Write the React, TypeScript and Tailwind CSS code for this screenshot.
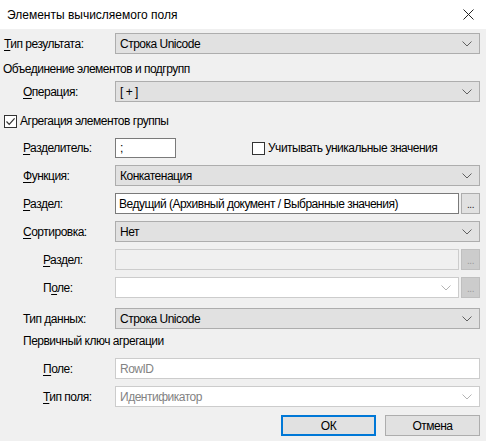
import React from 'react'

// ── Small pieces ──

function Chevron({ light = false }: { light?: boolean }) {
  return (
    <svg width="10" height="6" viewBox="0 0 10 6" className="shrink-0">
      <path
        d="M0.5 0.5 L5 5 L9.5 0.5"
        fill="none"
        stroke={light ? '#b4b4b4' : '#606060'}
        strokeWidth="1"
      />
    </svg>
  )
}

function Label({ text, u, indent }: { text: string; u: number; indent: 0 | 1 | 2 }) {
  const pad = indent === 0 ? 'pl-[4px]' : indent === 1 ? 'pl-[23px]' : 'pl-[43px]'
  return (
    <div className={`w-[115px] shrink-0 ${pad}`}>
      {text.slice(0, u)}
      <span className="underline underline-offset-2">{text[u]}</span>
      {text.slice(u + 1)}
    </div>
  )
}

function Combo({ value, disabled }: { value: string; disabled?: boolean }) {
  return (
    <div className="flex-1 h-full flex items-center justify-between bg-[#e1e1e1] border border-[#adadad] pl-[4px] pr-[7px]">
      <span className={disabled ? 'text-[#838383]' : ''}>{value}</span>
      <Chevron />
    </div>
  )
}

function Dots({ disabled }: { disabled?: boolean }) {
  return (
    <div
      className={`w-[19px] h-full ml-[2px] flex items-end justify-center pb-[3px] border ${
        disabled ? 'bg-[#cccccc] border-[#bfbfbf] text-[#9a9a9a]' : 'bg-[#e1e1e1] border-[#adadad] text-[#222]'
      }`}
    >
      <span className="text-[10px] leading-[10px] tracking-[-0.5px]">...</span>
    </div>
  )
}

function CheckBox({ checked }: { checked?: boolean }) {
  return (
    <div className="w-[13px] h-[13px] border border-[#333] bg-white flex items-center justify-center shrink-0">
      {checked && (
        <svg width="11" height="11" viewBox="0 0 11 11">
          <path d="M1.5 5.5 L4.2 8.3 L9.6 2.3" fill="none" stroke="#333" strokeWidth="1.2" />
        </svg>
      )}
    </div>
  )
}

// ── Dialog ──

export default function App() {
  return (
    <div className="w-[486px] h-[441px] bg-[#f0f0f0] text-[12px] leading-[16px] tracking-[-0.5px] text-black font-['Liberation_Sans',sans-serif] flex flex-col">
      {/* Title bar */}
      <div className="h-[29px] bg-white flex items-center justify-between pl-[7px] pr-[12px] shrink-0">
        <span className="text-[12px] tracking-normal">Элементы вычисляемого поля</span>
        <svg width="11" height="11" viewBox="0 0 11 11">
          <path d="M0.5 0.5 L10.5 10.5 M10.5 0.5 L0.5 10.5" stroke="#222" strokeWidth="1" />
        </svg>
      </div>

      <div className="flex flex-col pr-[6px]">
        <div className="mt-[4px] h-[21px] flex items-center">
          <Label text="Тип результата:" u={0} indent={0} />
          <Combo value="Строка Unicode" />
        </div>

        <div className="mt-[7px] h-[16px] pl-[3px]">Объединение элементов и подгрупп</div>

        <div className="mt-[4px] h-[21px] flex items-center">
          <Label text="Операция:" u={0} indent={1} />
          <Combo value="[ + ]" />
        </div>

        <div className="mt-[11px] h-[16px] flex items-center pl-[4px] gap-[3px]">
          <CheckBox checked />
          <span>Агрегация элементов группы</span>
        </div>

        <div className="mt-[9px] h-[20px] flex items-center">
          <Label text="Разделитель:" u={0} indent={1} />
          <div className="w-[61px] h-full bg-white border border-[#7a7a7a] pl-[4px] flex items-center">;</div>
          <div className="ml-[76px] flex items-center gap-[3px]">
            <CheckBox />
            <span>Учитывать уникальные значения</span>
          </div>
        </div>

        <div className="mt-[7px] h-[21px] flex items-center">
          <Label text="Функция:" u={0} indent={1} />
          <Combo value="Конкатенация" />
        </div>

        <div className="mt-[7px] h-[21px] flex items-center">
          <Label text="Раздел:" u={0} indent={1} />
          <div className="flex-1 h-full bg-white border border-[#7a7a7a] pl-[3px] flex items-center">
            Ведущий (Архивный документ / Выбранные значения)
          </div>
          <Dots />
        </div>

        <div className="mt-[7px] h-[21px] flex items-center">
          <Label text="Сортировка:" u={0} indent={1} />
          <Combo value="Нет" />
        </div>

        <div className="mt-[7px] h-[21px] flex items-center">
          <Label text="Раздел:" u={0} indent={2} />
          <div className="flex-1 h-full bg-[#f0f0f0] border border-[#cccccc]" />
          <Dots disabled />
        </div>

        <div className="mt-[7px] h-[21px] flex items-center">
          <Label text="Поле:" u={1} indent={2} />
          <div className="flex-1 h-full bg-white border border-[#cccccc] flex items-center justify-end pr-[7px]">
            <Chevron light />
          </div>
          <Dots disabled />
        </div>

        <div className="mt-[10px] h-[21px] flex items-center">
          <Label text="Тип данных:" u={4} indent={1} />
          <Combo value="Строка Unicode" />
        </div>

        <div className="mt-[4px] h-[16px] pl-[23px]">Первичный ключ агрегации</div>

        <div className="mt-[9px] h-[21px] flex items-center">
          <Label text="Поле:" u={0} indent={2} />
          <div className="flex-1 h-full bg-white border border-[#cccccc] pl-[4px] flex items-center text-[#838383]">
            RowID
          </div>
        </div>

        <div className="mt-[7px] h-[21px] flex items-center">
          <Label text="Тип поля:" u={0} indent={2} />
          <div className="flex-1 h-full bg-white border border-[#cccccc] pl-[4px] pr-[7px] flex items-center justify-between text-[#838383]">
            <span>Идентификатор</span>
            <Chevron light />
          </div>
        </div>

        <div className="mt-[8px] h-[21px] flex justify-end gap-[9px]">
          <button
            type="button"
            className="w-[95px] h-full bg-[#e1e1e1] border-2 border-[#0078d7] flex items-center justify-center"
          >
            ОК
          </button>
          <button
            type="button"
            className="w-[95px] h-full bg-[#e1e1e1] border border-[#adadad] flex items-center justify-center"
          >
            Отмена
          </button>
        </div>
      </div>
    </div>
  )
}
